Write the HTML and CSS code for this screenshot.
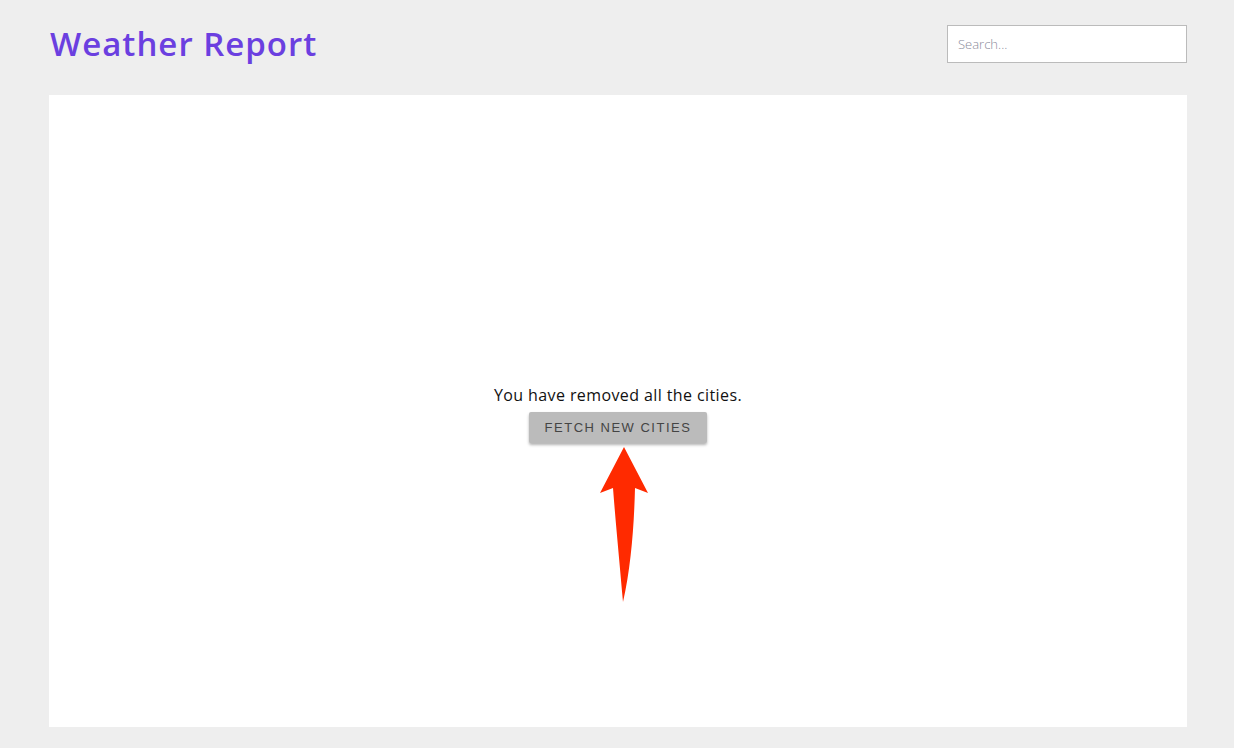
FILE: index.html
```html
<!DOCTYPE html>
<html lang="en">
<head>
<meta charset="utf-8">
<title>Weather Report</title>
<link rel="stylesheet" href="styles.css">
</head>
<body>
<div class="page">
  <header class="header">
    <h1 class="title">Weather Report</h1>
    <input class="search" type="text" placeholder="Search...">
  </header>
  <main class="card">
    <div class="empty">
      <p class="empty-text">You have removed all the cities.</p>
      <button class="fetch-btn" type="button">Fetch new cities</button>
      <svg class="arrow" width="60" height="160" viewBox="0 0 60 160" aria-hidden="true">
        <path d="M25 0 L49 46 L36 41 C35 80 32 120 24 155 C21 120 17 80 14 41 L1 46 Z" fill="#ff2a00"/>
      </svg>
    </div>
  </main>
</div>
</body>
</html>
```
FILE: styles.css
```css
html, body {
  margin: 0;
  padding: 0;
  background: #eeeeee;
}
body {
  font-family: "Open Sans", "DejaVu Sans", sans-serif;
}
.page {
  width: 1138px;
  margin-left: 49px;
  display: flex;
  flex-direction: column;
}
.header {
  height: 95px;
  display: flex;
  align-items: flex-start;
  justify-content: space-between;
}
.title {
  margin: 22px 0 0 1px;
  font-size: 33px;
  font-weight: 600;
  color: #6b3fe0;
  letter-spacing: 1px;
  line-height: 44px;
}
.search {
  margin-top: 25px;
  width: 240px;
  height: 38px;
  box-sizing: border-box;
  border: 1px solid #bbbbbb;
  background: #fff;
  padding: 0 10px;
  font-family: "Open Sans", sans-serif;
  font-size: 13px;
  color: #333;
  outline: none;
}
.search::placeholder {
  color: #8a8a9a;
  font-weight: 300;
}
.card {
  background: #ffffff;
  height: 632px;
  display: flex;
  align-items: center;
  justify-content: center;
}
.empty {
  position: relative;
  display: flex;
  flex-direction: column;
  align-items: center;
  margin-top: 6px;
}
.empty-text {
  margin: 0 0 7px;
  font-size: 16px;
  color: #111;
  line-height: 20px;
  letter-spacing: 0.4px;
}
.fetch-btn {
  width: 178px;
  height: 31px;
  border: none;
  border-radius: 2px;
  background: #bbbbbb;
  color: #444;
  font-family: "Liberation Sans", Arial, sans-serif;
  font-size: 13px;
  letter-spacing: 1.5px;
  text-transform: uppercase;
  box-shadow: 0 2px 3px rgba(0,0,0,0.3);
  cursor: pointer;
}
.arrow {
  position: absolute;
  left: calc(50% - 19px);
  top: 62px;
}
```
